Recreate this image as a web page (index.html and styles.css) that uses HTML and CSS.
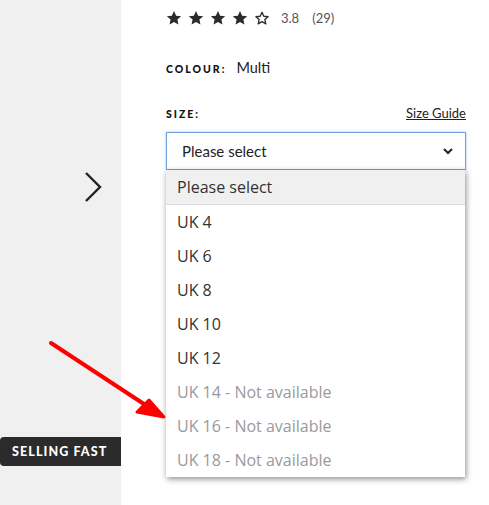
FILE: index.html
```html
<!DOCTYPE html>
<html>
<head>
  <meta charset="UTF-8">
  <title>Product Size</title>
  <link rel="stylesheet" href="styles.css">
</head>
<body>

  <div class="page">
    <div class="gallery">
      <svg class="next" width="18" height="32" viewBox="0 0 18 32">
        <path d="M2 2 L16 16 L2 30" fill="none" stroke="#222" stroke-width="2.4"/>
      </svg>
      <div class="badge">SELLING FAST</div>
    </div>

    <div class="details">
      <div class="rating">
        <span class="stars">
          <svg viewBox="0 0 24 24"><path class="full" d="M12 1.5l3.2 7 7.6.8-5.7 5.1 1.6 7.5L12 18l-6.7 3.9 1.6-7.5-5.7-5.1 7.6-.8z"/></svg>
          <svg viewBox="0 0 24 24"><path class="full" d="M12 1.5l3.2 7 7.6.8-5.7 5.1 1.6 7.5L12 18l-6.7 3.9 1.6-7.5-5.7-5.1 7.6-.8z"/></svg>
          <svg viewBox="0 0 24 24"><path class="full" d="M12 1.5l3.2 7 7.6.8-5.7 5.1 1.6 7.5L12 18l-6.7 3.9 1.6-7.5-5.7-5.1 7.6-.8z"/></svg>
          <svg viewBox="0 0 24 24"><path class="full" d="M12 1.5l3.2 7 7.6.8-5.7 5.1 1.6 7.5L12 18l-6.7 3.9 1.6-7.5-5.7-5.1 7.6-.8z"/></svg>
          <svg viewBox="0 0 24 24"><path class="empty" d="M12 3.5l2.7 5.9 6.4.7-4.8 4.3 1.4 6.3L12 17.4l-5.7 3.3 1.4-6.3-4.8-4.3 6.4-.7z"/></svg>
        </span>
        <span class="score">3.8</span>
        <span class="count">(29)</span>
      </div>

      <div class="colour">
        <span class="label">COLOUR:</span>
        <span class="value">Multi</span>
      </div>

      <div class="size-head">
        <span class="label">SIZE:</span>
        <a class="guide" href="#">Size Guide</a>
      </div>

      <div class="select-wrap">
        <div class="select">
          <span>Please select</span>
          <svg width="10" height="7" viewBox="0 0 10 7"><path d="M1 1 L5 5 L9 1" fill="none" stroke="#222" stroke-width="2"/></svg>
        </div>
        <ul class="options">
          <li class="current">Please select</li>
          <li>UK 4</li>
          <li>UK 6</li>
          <li>UK 8</li>
          <li>UK 10</li>
          <li>UK 12</li>
          <li class="off">UK 14 - Not available</li>
          <li class="off">UK 16 - Not available</li>
          <li class="off">UK 18 - Not available</li>
        </ul>
      </div>
    </div>
  </div>

  <svg class="arrow" width="489" height="505" viewBox="0 0 489 505">
    <line x1="51" y1="343" x2="150" y2="408" stroke="#f00" stroke-width="4" stroke-linecap="round"/>
    <polygon points="164,417 137,412 149,400" fill="#f00" stroke="#f00" stroke-width="3" stroke-linejoin="round"/>
  </svg>

</body>
</html>
```

FILE: styles.css
```css
body {
  margin: 0;
  font-family: "Lato", "Liberation Sans", sans-serif;
  color: #222;
  background: #fff;
  overflow: hidden;
}
.page {
  display: flex;
  height: 505px;
}
.gallery {
  width: 121px;
  flex-shrink: 0;
  background: #f1f0f0;
  display: flex;
  flex-direction: column;
  align-items: flex-start;
}
.next {
  margin: 171px 0 0 84px;
}
.badge {
  margin-top: 234px;
  width: 121px;
  height: 29px;
  line-height: 29px;
  box-sizing: border-box;
  padding-left: 12px;
  background: #2b2b2b;
  color: #fff;
  font-size: 12.5px;
  font-weight: 900;
  letter-spacing: 1.1px;
  border-radius: 4px 0 0 4px;
}
.details {
  padding-left: 45px;
  width: 300px;
}
.rating {
  display: flex;
  align-items: center;
  height: 20px;
  margin-top: 8px;
  font-size: 13px;
  color: #555;
}
.stars {
  display: flex;
  gap: 6px;
  margin-right: 11px;
}
.stars svg {
  width: 16px;
  height: 16px;
}
.stars .full {
  fill: #2b2b2b;
}
.stars .empty {
  fill: none;
  stroke: #2b2b2b;
  stroke-width: 2;
  stroke-linejoin: round;
}
.count {
  margin-left: 13px;
}
.label {
  font-size: 10.5px;
  font-weight: 900;
  letter-spacing: 2px;
  color: #111;
}
.colour {
  display: flex;
  align-items: baseline;
  gap: 10px;
  margin-top: 31px;
}
.value {
  font-size: 14.5px;
  color: #222;
}
.size-head {
  display: flex;
  justify-content: space-between;
  align-items: baseline;
  margin-top: 29px;
}
.guide {
  font-size: 13px;
  color: #222;
  text-decoration: underline;
}
.select-wrap {
  position: relative;
  margin-top: 11px;
}
.select {
  height: 38px;
  box-sizing: border-box;
  border: 1px solid #6fa0d8;
  box-shadow: 0 0 3px #a8c8ee;
  display: flex;
  align-items: center;
  justify-content: space-between;
  padding: 0 12px 0 15px;
  font-size: 15px;
  color: #222;
}
.options {
  position: absolute;
  top: 38px;
  left: 0;
  width: 299px;
  margin: 0;
  padding: 0;
  list-style: none;
  background: #fff;
  box-shadow: 1px 2px 6px rgba(0, 0, 0, 0.45);
  font-family: "Open Sans", "Noto Sans", sans-serif;
  font-size: 16px;
  color: #333;
}
.options li {
  height: 34px;
  line-height: 34px;
  padding-left: 11px;
}
.options .current {
  background: #f0f0f0;
  border-bottom: 1px solid #ddd;
  height: 34px;
}
.options .off {
  color: #9a9a9a;
}
.arrow {
  position: absolute;
  left: 0;
  top: 0;
  pointer-events: none;
}
```
